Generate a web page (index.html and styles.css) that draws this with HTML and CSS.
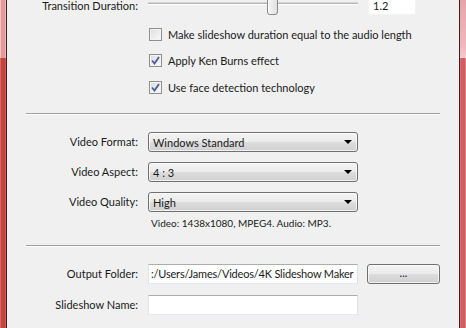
FILE: index.html
```html
<!DOCTYPE html>
<html>
<head>
<meta charset="utf-8">
<link rel="stylesheet" href="styles.css">
</head>
<body>
<div class="window">
  <div class="frame frame-l"><div class="frame-top"></div><div class="frame-bottom"></div></div>
  <main class="content">
    <div class="row row-first">
      <label class="lbl">Transition Duration:</label>
      <div class="slider"><div class="track"></div><div class="thumb"></div></div>
      <div class="spin">1.2</div>
    </div>

    <div class="checks">
      <div class="check"><span class="box"></span><span>Make slideshow duration equal to the audio length</span></div>
      <div class="check"><span class="box checked"><svg width="11" height="11" viewBox="0 0 11 11"><path d="M2 5.5 L4.5 8.5 L9 2" fill="none" stroke="#4a5c9a" stroke-width="1.8"/></svg></span><span>Apply Ken Burns effect</span></div>
      <div class="check"><span class="box checked"><svg width="11" height="11" viewBox="0 0 11 11"><path d="M2 5.5 L4.5 8.5 L9 2" fill="none" stroke="#4a5c9a" stroke-width="1.8"/></svg></span><span>Use face detection technology</span></div>
    </div>

    <div class="sep sep-1"></div>

    <div class="combos">
      <div class="row"><label class="lbl">Video Format:</label><div class="combo"><span>Windows Standard</span><i class="arrow"></i></div></div>
      <div class="row"><label class="lbl">Video Aspect:</label><div class="combo"><span>4 : 3</span><i class="arrow"></i></div></div>
      <div class="row"><label class="lbl">Video Quality:</label><div class="combo"><span>High</span><i class="arrow"></i></div></div>
    </div>
    <div class="info">Video: 1438x1080, MPEG4. Audio: MP3.</div>

    <div class="sep sep-2"></div>

    <div class="row row-out"><label class="lbl">Output Folder:</label><div class="textbox textbox-path">:/Users/James/Videos/4K Slideshow Maker</div><div class="btn">...</div></div>
    <div class="row row-name"><label class="lbl">Slideshow Name:</label><div class="textbox"></div></div>
  </main>
  <div class="frame frame-r"><div class="frame-top"></div><div class="frame-bottom"></div></div>
</div>
</body>
</html>
```

FILE: styles.css
```css
html, body {
  margin: 0;
  padding: 0;
  width: 466px;
  height: 328px;
  overflow: hidden;
  background: #f0f0f0;
}
body {
  font-family: "Lato", "Liberation Sans", sans-serif;
  font-size: 11px;
  color: #1a1a1a;
}
.window {
  display: flex;
  width: 466px;
  height: 328px;
}
.frame {
  width: 7px;
  display: flex;
  flex-direction: column;
  flex: none;
}
.frame-l { box-shadow: inset -1px 0 0 #3b1e1e; }
.frame-r { box-shadow: inset 1px 0 0 #3b1e1e; }
.frame-top { height: 58px; }
.frame-bottom { flex: 1; }
.frame-l .frame-top {
  background: linear-gradient(to right, #f2c3c3 0 1px, #e39a9a 1px 5px, #f1b9b9 5px 6px, transparent 6px);
}
.frame-l .frame-bottom {
  background: linear-gradient(to right, #d86a64 0 1px, #c3443d 1px 5px, #d25a52 5px 6px, transparent 6px);
}
.frame-r .frame-top {
  background: linear-gradient(to bottom, #e8a3aa, #f0b7be 80%, #f6cbd0);
  background-clip: padding-box;
  border-left: 1px solid transparent;
}
.frame-r .frame-bottom {
  background: linear-gradient(to right, transparent 0 1px, #dc7078 1px 2px, #d25c64 2px 6px, #e08088 6px);
}
.content {
  flex: 1;
  display: flex;
  flex-direction: column;
}
.row {
  display: flex;
  align-items: center;
  height: 20px;
}
.row-first {
  height: 12px;
  margin-top: 0;
}
.lbl {
  width: 131px;
  text-align: right;
  margin-right: 10px;
  flex: none;
  white-space: nowrap;
  line-height: 12px;
}
.slider {
  position: relative;
  width: 210px;
  height: 12px;
}
.track {
  margin-top: 2px;
  height: 1px;
  background: #b4b4b4;
  border-bottom: 1px solid #ffffff;
  border-top: 1px solid #d6d6d6;
}
.thumb {
  position: absolute;
  left: 119px;
  top: -6px;
  width: 9px;
  height: 19px;
  border: 1px solid #8a8a8a;
  border-radius: 0 0 3px 3px;
  background: linear-gradient(to right, #f6f6f6, #e0e0e0);
  box-shadow: inset 1px 0 0 #fff;
}
.spin {
  margin-left: 10px;
  width: 48px;
  height: 15px;
  line-height: 12px;
  padding: 0 0 0 4px;
  align-self: flex-start;
  background: #ffffff;
  border: 1px solid #f3f3f3;
  border-top: none;
  box-sizing: border-box;
}
.checks {
  display: flex;
  flex-direction: column;
  margin-top: 16px;
  padding-left: 142px;
}
.check {
  display: flex;
  align-items: center;
  height: 13px;
  gap: 6px;
  margin-top: 13px;
}
.check:first-child { margin-top: 0; }
.check:last-child { margin-top: 14px; }
.box {
  width: 13px;
  height: 13px;
  box-sizing: border-box;
  border: 1px solid #8e8f8f;
  background: linear-gradient(135deg, #dcdcdc, #fafafa);
  box-shadow: inset 0 0 0 1px #f4f4f4;
  display: flex;
  align-items: center;
  justify-content: center;
  flex: none;
}
.sep {
  margin-left: 19px;
  margin-right: 19px;
  border-top: 1px solid #a0a0a0;
  border-bottom: 1px solid #ffffff;
}
.sep-1 { margin-top: 19px; }
.combos {
  display: flex;
  flex-direction: column;
  gap: 10px;
  margin-top: 17px;
}
.combo {
  width: 210px;
  height: 20px;
  box-sizing: border-box;
  border: 1px solid #707070;
  border-radius: 3px;
  background: linear-gradient(to bottom, #f3f3f3 0%, #ebebeb 50%, #dddddd 51%, #d0d0d0 100%);
  box-shadow: inset 0 0 0 1px rgba(255,255,255,0.7);
  display: flex;
  align-items: center;
  padding-left: 4px;
}
.arrow {
  margin-left: auto;
  margin-right: 5px;
  width: 0;
  height: 0;
  border-left: 4px solid transparent;
  border-right: 4px solid transparent;
  border-top: 4px solid #000;
}
.info {
  margin-top: 4px;
  padding-left: 144px;
  height: 14px;
  line-height: 14px;
  font-size: 10px;
}
.sep-2 { margin-top: 15px; }
.row-out { margin-top: 17px; }
.row-name { margin-top: 11px; }
.textbox {
  width: 210px;
  height: 20px;
  box-sizing: border-box;
  background: #fff;
  border: 1px solid;
  border-color: #abadb3 #dbdfe6 #e3e9ef #e2e3ea;
  padding-left: 3px;
  line-height: 18px;
  white-space: nowrap;
  overflow: hidden;
}
.textbox-path {
  padding-left: 2px;
  letter-spacing: -0.2px;
}
.btn {
  margin-left: 9px;
  width: 73px;
  height: 20px;
  box-sizing: border-box;
  border: 1px solid #707070;
  border-radius: 3px;
  background: linear-gradient(to bottom, #f3f3f3 0%, #ebebeb 50%, #dddddd 51%, #d0d0d0 100%);
  box-shadow: inset 0 0 0 1px rgba(255,255,255,0.7);
  text-align: center;
  line-height: 16px;
}
```
